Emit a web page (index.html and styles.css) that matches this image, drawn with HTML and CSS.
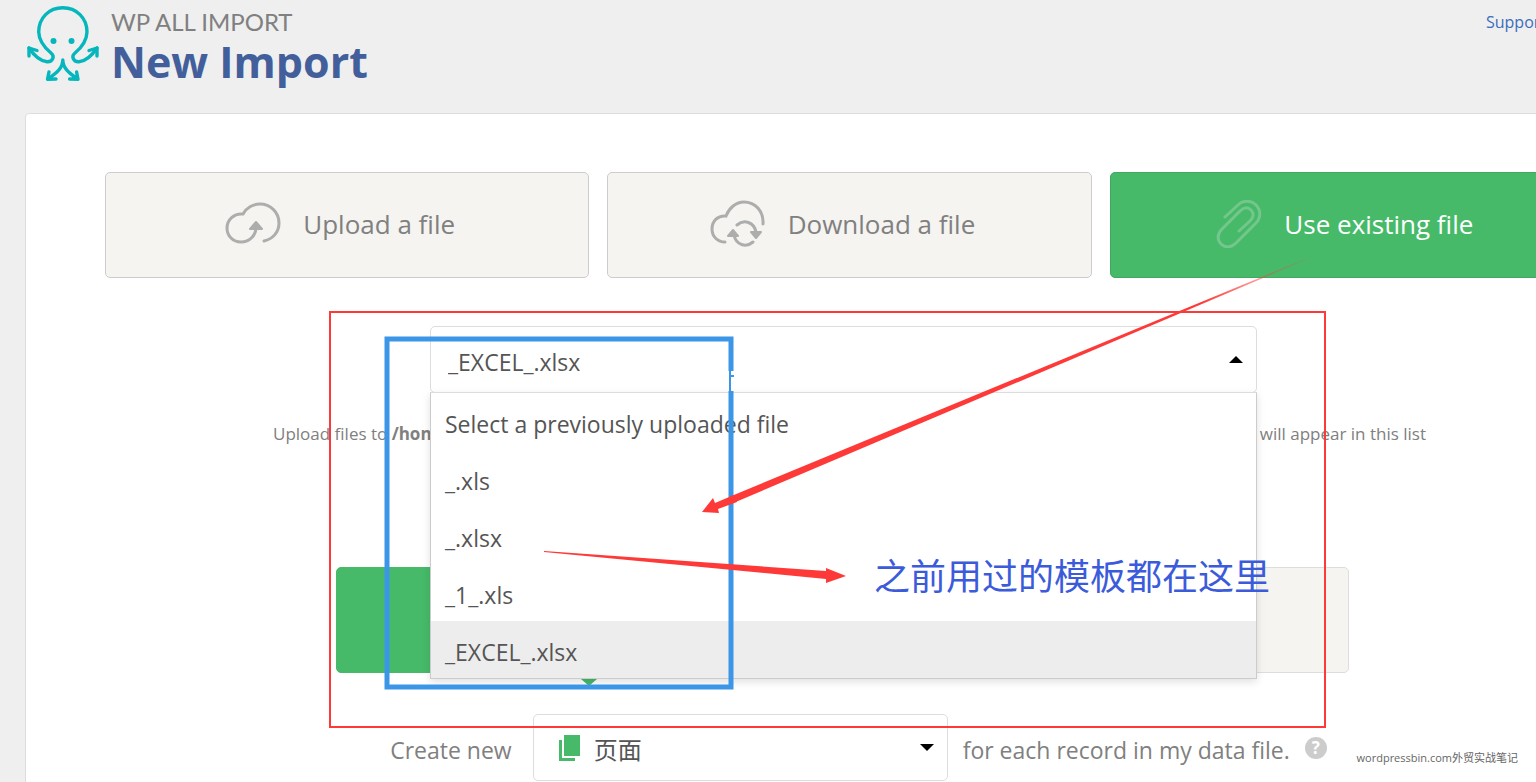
FILE: index.html
```
<!doctype html>
<html lang="en">
  <head>
    <meta charset="UTF-8" />
    <meta name="viewport" content="width=device-width, initial-scale=1.0" />
    <title>New Import</title>
    <link rel="stylesheet" href="styles.css">
  </head>
  <body>
    <header class="header">
      <svg class="logo" width="76" height="80" viewBox="0 0 76 80" fill="none" stroke="#06b6bd" stroke-width="3.4" stroke-linecap="round" stroke-linejoin="round">
        <path d="M4 44C8 50 14 57 22 57.7C28 58 30 52 26 49C20 44 14 38 13.7 28C13.7 14 24 3.7 37.8 3.7C51.500 3.700 62 14 62 28C61.700 38 56 44 50 49C46 52 48 58 54 57.700C62 57 68 50 72 44" />
        <path d="M4 52V44L12 46.500M64 46.500L72 44V52" />
        <path d="M37.800 56C37.800 65 30 70 23 75M37.800 56C37.800 65 46 70 52.600 75M24 68L22.500 75.300L31 75M51.600 68L53 75.300L44.600 75" />
        <circle cx="28.500" cy="37" r="3" fill="#06b6bd" stroke="none" />
        <circle cx="46.500" cy="37" r="3" fill="#06b6bd" stroke="none" />
      </svg>
      <div class="title">
        <p>WP ALL IMPORT</p>
        <h1>New Import</h1>
      </div>
      <a class="support" href="#">Support</a>
    </header>

    <main class="panel">
      <div class="sources">
        <button type="button" class="source">
          <svg width="56" height="44" viewBox="0 0 56 44" fill="none" stroke="#adadad" stroke-width="3" stroke-linecap="round">
            <path d="M39 39C48 37 54 30 54 21C54 10 45 2 35 2C28 2 21 6 18 12C9 11 2 18 2 26C2 34 8 40 16 40C25 40 31 33 31 25" />
            <path d="M31 20L25 27H37Z" fill="#adadad" stroke-width="2" stroke-linejoin="round" />
          </svg>
          Upload a file
        </button>
        <button type="button" class="source">
          <svg width="56" height="48" viewBox="0 0 56 48" fill="none" stroke="#adadad" stroke-width="3" stroke-linecap="round">
            <path d="M15 42C8 42 2 37 2 29C2 21 8 15 16 16C19 8 26 2 34 2C45 2 54 11 53 24" />
            <path d="M27 25C34 19 44 22 46 32M43 42C36 48 26 45 24 35" />
            <path d="M46 38L41 32H51ZM23 30L18 36H28Z" fill="#adadad" stroke-width="2" stroke-linejoin="round" />
          </svg>
          Download a file
        </button>
        <button type="button" class="source active">
          <svg width="46" height="48" viewBox="0 0 46 48" fill="none" stroke="#73c78c" stroke-width="3" stroke-linecap="round">
            <path d="M9 17L22 5C27 0 35 0 40 5C45 10 45 18 40 23L20 43C15 48 9 48 5 44C1 40 1 34 6 29L24 11C28 7 32 7 35 10C38 13 38 17 34 21L23 31" />
          </svg>
          Use existing file
        </button>
      </div>

      <div class="file-picker">
        <select class="select" aria-label="Previously uploaded file">
          <option>_EXCEL_.xlsx</option>
        </select>
        <span class="caret up"></span>
        <ul class="menu">
          <li>Select a previously uploaded file</li>
          <li>_.xls</li>
          <li>_.xlsx</li>
          <li>_1_.xls</li>
          <li class="selected">_EXCEL_.xlsx</li>
        </ul>
      </div>

      <div class="hint">
        <span>Upload files to <strong>/hon</strong></span>
        <span>will appear in this list</span>
      </div>

      <div class="choices">
        <button type="button" class="choice active" aria-label="New Items"></button>
        <button type="button" class="choice" aria-label="Existing Items"></button>
      </div>

      <div class="record">
        <label for="post-type">Create new</label>
        <div class="type-picker">
          <svg class="pages" width="24" height="28" viewBox="0 0 24 28" fill="#46ba69">
            <path d="M6 1H22V22H6ZM1 6H4V24H17V27H1Z" />
          </svg>
          <select class="select" id="post-type">
            <option>页面</option>
          </select>
          <span class="caret"></span>
        </div>
        <span>for each record in my data file.</span>
        <button type="button" class="help">?</button>
      </div>
    </main>

    <!-- Annotations drawn over the page -->
    <svg class="marks" width="1536" height="782" viewBox="0 0 1536 782">
      <defs>
        <linearGradient id="fade" x1="1318" y1="253" x2="1200" y2="303" gradientUnits="userSpaceOnUse">
          <stop offset="0" stop-color="#fd3a38" stop-opacity="0" />
          <stop offset="1" stop-color="#fd3a38" />
        </linearGradient>
      </defs>
      <rect x="330" y="312" width="995" height="415" fill="none" stroke="#fd3a38" stroke-width="2" />
      <path d="M731 371V339H387V687H731V391" fill="none" stroke="#3c96e8" stroke-width="5" />
      <path d="M730 371V391M730 376H734" fill="none" stroke="#3c96e8" stroke-width="2" />
      <path d="M1310 257L729 497L731 504L1310 258Z" fill="url(#fade)" />
      <path d="M734 495L715 503L713 498L702 512L719 513L718 509L737 502Z" fill="#fd3a38" />
      <path d="M544 551L826 571V568L846 576L826 583V579L544 552Z" fill="#fd3a38" />
    </svg>
    <p class="note">之前用过的模板都在这里</p>
    <p class="watermark">wordpressbin.com外贸实战笔记</p>
  </body>
</html>
```
FILE: styles.css
```
/* Global Styles */
* {
  box-sizing: border-box;
}

body {
  font-family: "Open Sans", "Noto Sans CJK SC", sans-serif;
  font-size: 23px;
  background-color: #efefef;
  color: #808080;
  margin: 0;
  position: relative;
  height: 100vh;
  overflow: hidden;
}

p,
h1 {
  margin: 0;
}

button,
select {
  font: inherit;
  color: inherit;
}

/* Header */
.header {
  display: flex;
  gap: 10px;
  height: 113px;
  padding: 4px 0 0 25px;
}

.logo {
  flex: none;
}

.title p {
  font-family: Lato, sans-serif;
  font-size: 24px;
  line-height: 36px;
}

.title h1 {
  font-size: 43px;
  line-height: 44px;
  color: #435f9b;
}

.support {
  font-size: 16px;
  line-height: 36px;
  margin: 0 -10px 0 auto;
  color: #3a6ebc;
  text-decoration: none;
}

/* Panel runs past the right edge of the window */
.panel {
  margin: 0 -138px 0 25px;
  padding: 58px 79px 40px;
  background-color: #fff;
  border: 1px solid #ddd;
  border-radius: 4px;
}

.sources {
  display: flex;
  gap: 18px;
}

.source {
  flex: 1;
  display: flex;
  justify-content: center;
  align-items: center;
  gap: 22px;
  height: 106px;
  padding: 0 14px 2px 0;
  font-size: 26px;
  background-color: #f5f4f0;
  border: 1px solid #ccc;
  border-radius: 5px;
}

.source.active {
  color: #fff;
  background-color: #46ba69;
  border-color: #40a862;
}

/* File drop-down */
.file-picker {
  position: relative;
  width: 827px;
  margin: 48px auto 0;
  left: -6px;
  color: #555;
}

.select {
  display: block;
  width: 100%;
  height: 67px;
  padding: 5px 16px 0 17px;
  background-color: #fff;
  border: 1px solid #ddd;
  border-radius: 5px;
  appearance: none;
  color: #555;
}

.caret {
  position: absolute;
  top: 30px;
  right: 14px;
  border: 7px solid transparent;
  border-top-color: #000;
  border-bottom: 0;
}

.caret.up {
  border-top: 0;
  border-bottom: 7px solid #000;
}

.menu {
  position: absolute;
  top: 100%;
  left: 0;
  right: 0;
  z-index: 1;
  margin: -1px 0 0;
  padding: 0;
  list-style: none;
  background-color: #fff;
  border: 1px solid #ccc;
  border-top-color: #ddd;
  box-shadow: 0 3px 8px rgba(0, 0, 0, 0.12);
}

.menu li {
  height: 57px;
  padding: 0 14px;
  line-height: 62px;
}

.menu .selected {
  background-color: #ededed;
}

.hint {
  display: flex;
  justify-content: space-between;
  width: 1153px;
  margin: 29px auto 0;
  font-size: 17px;
  line-height: 24px;
}

/* Import type */
.choices {
  display: flex;
  width: 1027px;
  margin: 121px auto 0;
  padding-right: 14px;
}

.choice {
  flex: 1;
  height: 106px;
  background-color: #f5f4f0;
  border: 1px solid #ddd;
  border-radius: 5px;
}

.choice.active {
  position: relative;
  background-color: #46ba69;
  border-color: #46ba69;
}

.choice.active::after {
  content: "";
  position: absolute;
  top: 100%;
  left: 50%;
  margin-left: -16px;
  border: 16px solid transparent;
  border-top: 14px solid #46ba69;
  border-bottom: 0;
}

.record {
  display: flex;
  justify-content: center;
  align-items: center;
  gap: 15px;
  margin-top: 41px;
  padding-left: 18px;
  line-height: 36px;
}

.record label,
.record > span {
  padding-top: 4px;
}

.record label {
  margin-right: 6px;
}

.type-picker {
  position: relative;
  width: 415px;
}

.type-picker .select {
  padding-left: 60px;
  font-size: 24px;
}

.pages {
  position: absolute;
  top: 20px;
  left: 25px;
}

.help {
  width: 22px;
  height: 22px;
  padding: 0;
  border: 0;
  border-radius: 50%;
  background-color: #ccc;
  color: #fff;
  font-size: 17px;
  font-weight: bold;
  line-height: 22px;
}

/* Annotations */
.marks {
  position: absolute;
  top: 0;
  left: 0;
  z-index: 2;
  pointer-events: none;
}

.note {
  position: absolute;
  top: 547px;
  left: 874px;
  z-index: 3;
  font-family: "Noto Sans CJK SC", sans-serif;
  font-size: 36px;
  line-height: 54px;
  color: #3b5bdb;
}

.watermark {
  position: absolute;
  top: 749px;
  right: 18px;
  z-index: 3;
  font-size: 11px;
  line-height: 18px;
  color: #666;
}
```
